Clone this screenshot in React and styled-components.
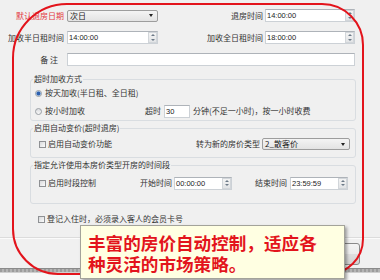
import React from 'react';
import styled, { createGlobalStyle } from 'styled-components';

const Global = createGlobalStyle`
  html, body { margin: 0; padding: 0; }
  body {
    width: 380px; height: 280px; overflow: hidden;
    background: #f0f0f0;
    font-family: "Noto Sans CJK SC", "Noto Sans", sans-serif;
    font-size: 8px; color: #333;
  }
`;

const Screen = styled.div`
  position: relative;
  width: 380px;
  height: 280px;
  display: flex;
  flex-direction: column;
  overflow: hidden;
`;

const Dialog = styled.div`
  flex: 0 0 268px;
  display: flex;
  flex-direction: column;
  padding-top: 9px;
  box-sizing: border-box;
`;

const FieldRow = styled.div`
  display: flex;
  align-items: center;
  height: 13px;
  margin-top: ${p => p.$mt || 0}px;
`;

const Label = styled.span`
  flex: none;
  width: ${p => p.$w}px;
  margin-right: ${p => p.$gap ?? 3}px;
  padding-right: ${p => p.$pr || 0}px;
  box-sizing: border-box;
  text-align: right;
  white-space: nowrap;
  line-height: 10px;
  color: ${p => (p.$red ? '#e33a3f' : '#333')};
`;

const TextBox = styled.div`
  flex: none;
  width: ${p => p.$w}px;
  height: 13px;
  box-sizing: border-box;
  background: #fff;
  border: 1px solid #ccd1d6;
  border-top-color: #aeb3b9;
  display: flex;
  align-items: center;
  padding-left: 1px;
  font-family: "Liberation Sans", Arial, sans-serif;
  font-size: 7.5px;
  color: #222;
`;

const SpinBox = styled.div`
  margin-left: auto;
  width: 9px;
  height: 11px;
  box-sizing: border-box;
  border: 1px solid #d2d6da;
  background: linear-gradient(#f4f4f4, #e2e4e6);
  display: flex;
  flex-direction: column;
  align-items: center;
  justify-content: space-around;
`;

const SpinArrow = styled.span`
  width: 0; height: 0;
  border-left: 2px solid transparent;
  border-right: 2px solid transparent;
  ${p => (p.$up ? 'border-bottom: 2px solid #6d7a88;' : 'border-top: 2px solid #6d7a88;')}
`;

const Combo = styled.div`
  flex: none;
  width: ${p => p.$w}px;
  height: 12px;
  box-sizing: border-box;
  border: 1px solid #9d9d9d;
  border-radius: 2px;
  background: linear-gradient(#f4f4f4, #e3e3e3);
  display: flex;
  align-items: center;
  padding: 0 4px 0 2px;
  line-height: 10px;
  color: #222;
`;

const ComboArrow = styled.span`
  margin-left: auto;
  width: 0; height: 0;
  border-left: 2.5px solid transparent;
  border-right: 2.5px solid transparent;
  border-top: 3px solid #222;
`;

const Group = styled.section`
  margin: ${p => p.$mt}px 0 0 30px;
  width: 326px;
  box-sizing: border-box;
  border: 1px solid #d9dde1;
  border-radius: 3px;
  padding: 0 5px ${p => p.$pb}px 4px;
  display: flex;
  flex-direction: column;
`;

const GroupTitle = styled.div`
  margin: -6px 0 0 -2px;
  align-self: flex-start;
  padding: 0 1px;
  height: 10px;
  line-height: 10px;
  background: #f0f0f0;
  color: #333;
  white-space: nowrap;
`;

const OptionRow = styled.div`
  display: flex;
  align-items: center;
  height: ${p => p.$h || 12}px;
  margin-top: ${p => p.$mt || 0}px;
`;

const Option = styled.label`
  flex: none;
  display: flex;
  align-items: center;
  width: ${p => (p.$w ? `${p.$w}px` : 'auto')};
  margin-left: ${p => p.$ml || 0}px;
  line-height: 10px;
  white-space: nowrap;
`;

const Radio = styled.span`
  flex: none;
  width: 7px;
  height: 7px;
  box-sizing: border-box;
  border-radius: 50%;
  border: 1px solid #9a9fa5;
  background: ${p => (p.$on ? 'radial-gradient(circle, #2c5fae 0 1.6px, #9fc0e6 2.2px, #f3f5f8 3px)' : 'linear-gradient(#dadcdf, #f7f7f7)')};
  margin-right: 3px;
`;

const Check = styled.span`
  flex: none;
  width: 7px;
  height: 7px;
  box-sizing: border-box;
  border: 1px solid #8f9194;
  background: linear-gradient(135deg, #d8d9db, #fbfbfb);
  margin-right: 2px;
`;

const Inline = styled.span`
  flex: none;
  white-space: nowrap;
  line-height: 10px;
  margin-right: ${p => p.$gap || 0}px;
`;

const Right = styled.div`
  margin-left: auto;
  display: flex;
  align-items: center;
`;

const Spacer = styled.span`
  flex: none;
  width: ${p => p.$w}px;
`;

const BottomRow = styled.div`
  display: flex;
  align-items: center;
  height: 12px;
  margin-top: 9px;
  padding-left: 38px;
`;

const Footer = styled.div`
  margin-top: 12px;
  flex: 1;
  border-top: 1px solid #dcdcdc;
  box-shadow: inset 0 1px #fbfbfb;
  display: flex;
  justify-content: flex-end;
  align-items: flex-start;
  gap: 8px;
  padding: 5px 20px 0 0;
`;

const Button = styled.div`
  width: 66px;
  height: 22px;
  box-sizing: border-box;
  border: 1px solid #8a8a8a;
  border-radius: 3px;
  background: linear-gradient(#f4f4f4, #ececec 48%, #dedede 52%, #d3d3d3);
`;

const WindowEdge = styled.div`
  flex: 0 0 5px;
  background: repeating-linear-gradient(90deg, #9c9c9c 0 2px, #b4b4b4 2px 4px);
  box-shadow: inset 0 1px #8a8a8a, inset 0 -1px #cfcfcf;
`;

const Below = styled.div`
  flex: 1;
  background: #f7f7f7;
`;

const RedFrame = styled.div`
  position: absolute;
  left: 12px;
  top: 3px;
  width: 352px;
  height: 272px;
  box-sizing: border-box;
  border: 2px solid #e3141c;
  border-radius: 55px 42px 36px 46px;
  pointer-events: none;
`;

const Callout = styled.div`
  position: absolute;
  left: 80px;
  top: 225px;
  width: 265px;
  height: 54px;
  box-sizing: border-box;
  background: #ffffe2;
  border: 1px solid #a3a39a;
  box-shadow: 2px 2px 3px rgba(0, 0, 0, 0.35);
  padding: 6px 0 0 7px;
  color: #e3141c;
  font-family: "Noto Sans CJK SC", sans-serif;
  font-weight: 700;
  font-size: 17.6px;
  line-height: 21px;
`;

const CalloutLine = styled.span`
  display: block;
  white-space: nowrap;
`;

const Spin = () => (
  <SpinBox>
    <SpinArrow $up />
    <SpinArrow />
  </SpinBox>
);

export default function App() {
  return (
    <>
      <Global />
      <Screen>
        <Dialog>
          <FieldRow>
            <Label $w={64} $red>默认退房日期</Label>
            <Combo $w={91}>次日<ComboArrow /></Combo>
            <Label $w={105} $gap={2}>退房时间</Label>
            <TextBox $w={90}>14:00:00<Spin /></TextBox>
          </FieldRow>
          <FieldRow $mt={9}>
            <Label $w={64}>加收半日租时间</Label>
            <TextBox $w={91}>14:00:00<Spin /></TextBox>
            <Label $w={105} $gap={2}>加收全日租时间</Label>
            <TextBox $w={90}>18:00:00<Spin /></TextBox>
          </FieldRow>
          <FieldRow $mt={9}>
            <Label $w={64} $pr={6}>备 注</Label>
            <TextBox $w={288} />
          </FieldRow>

          <Group $mt={13} $pb={2}>
            <GroupTitle>超时加收方式</GroupTitle>
            <OptionRow $mt={3}>
              <Option><Radio $on />按天加收(半日租、全日租)</Option>
            </OptionRow>
            <OptionRow $mt={5} $h={14}>
              <Option $w={110}><Radio />按小时加收</Option>
              <Inline $gap={3}>超时</Inline>
              <TextBox $w={26}>30</TextBox>
              <Spacer $w={3} />
              <Inline>分钟(不足一小时)，按一小时收费</Inline>
            </OptionRow>
          </Group>

          <Group $mt={7} $pb={6}>
            <GroupTitle>启用自动变价(超时退房)</GroupTitle>
            <OptionRow $mt={4} $h={14}>
              <Option $ml={4}><Check />启用自动变价功能</Option>
              <Right>
                <Inline $gap={2}>转为新的房价类型</Inline>
                <Combo $w={88}>2_散客价<ComboArrow /></Combo>
              </Right>
            </OptionRow>
          </Group>

          <Group $mt={7} $pb={13}>
            <GroupTitle>指定允许使用本房价类型开房的时间段</GroupTitle>
            <OptionRow $mt={6} $h={14}>
              <Option $w={105}><Spacer $w={4} /><Check />启用时段控制</Option>
              <Inline $gap={2}>开始时间</Inline>
              <TextBox $w={58}>00:00:00<Spin /></TextBox>
              <Spacer $w={23} />
              <Inline $gap={3}>结束时间</Inline>
              <TextBox $w={58}>23:59:59<Spin /></TextBox>
            </OptionRow>
          </Group>

          <BottomRow>
            <Option><Check />登记入住时，必须录入客人的会员卡号</Option>
          </BottomRow>

          <Footer>
            <Button />
            <Button />
          </Footer>
        </Dialog>
        <WindowEdge />
        <Below />

        <RedFrame />
        <Callout>
          <CalloutLine>丰富的房价自动控制，适应各</CalloutLine>
          <CalloutLine>种灵活的市场策略。</CalloutLine>
        </Callout>
      </Screen>
    </>
  );
}
